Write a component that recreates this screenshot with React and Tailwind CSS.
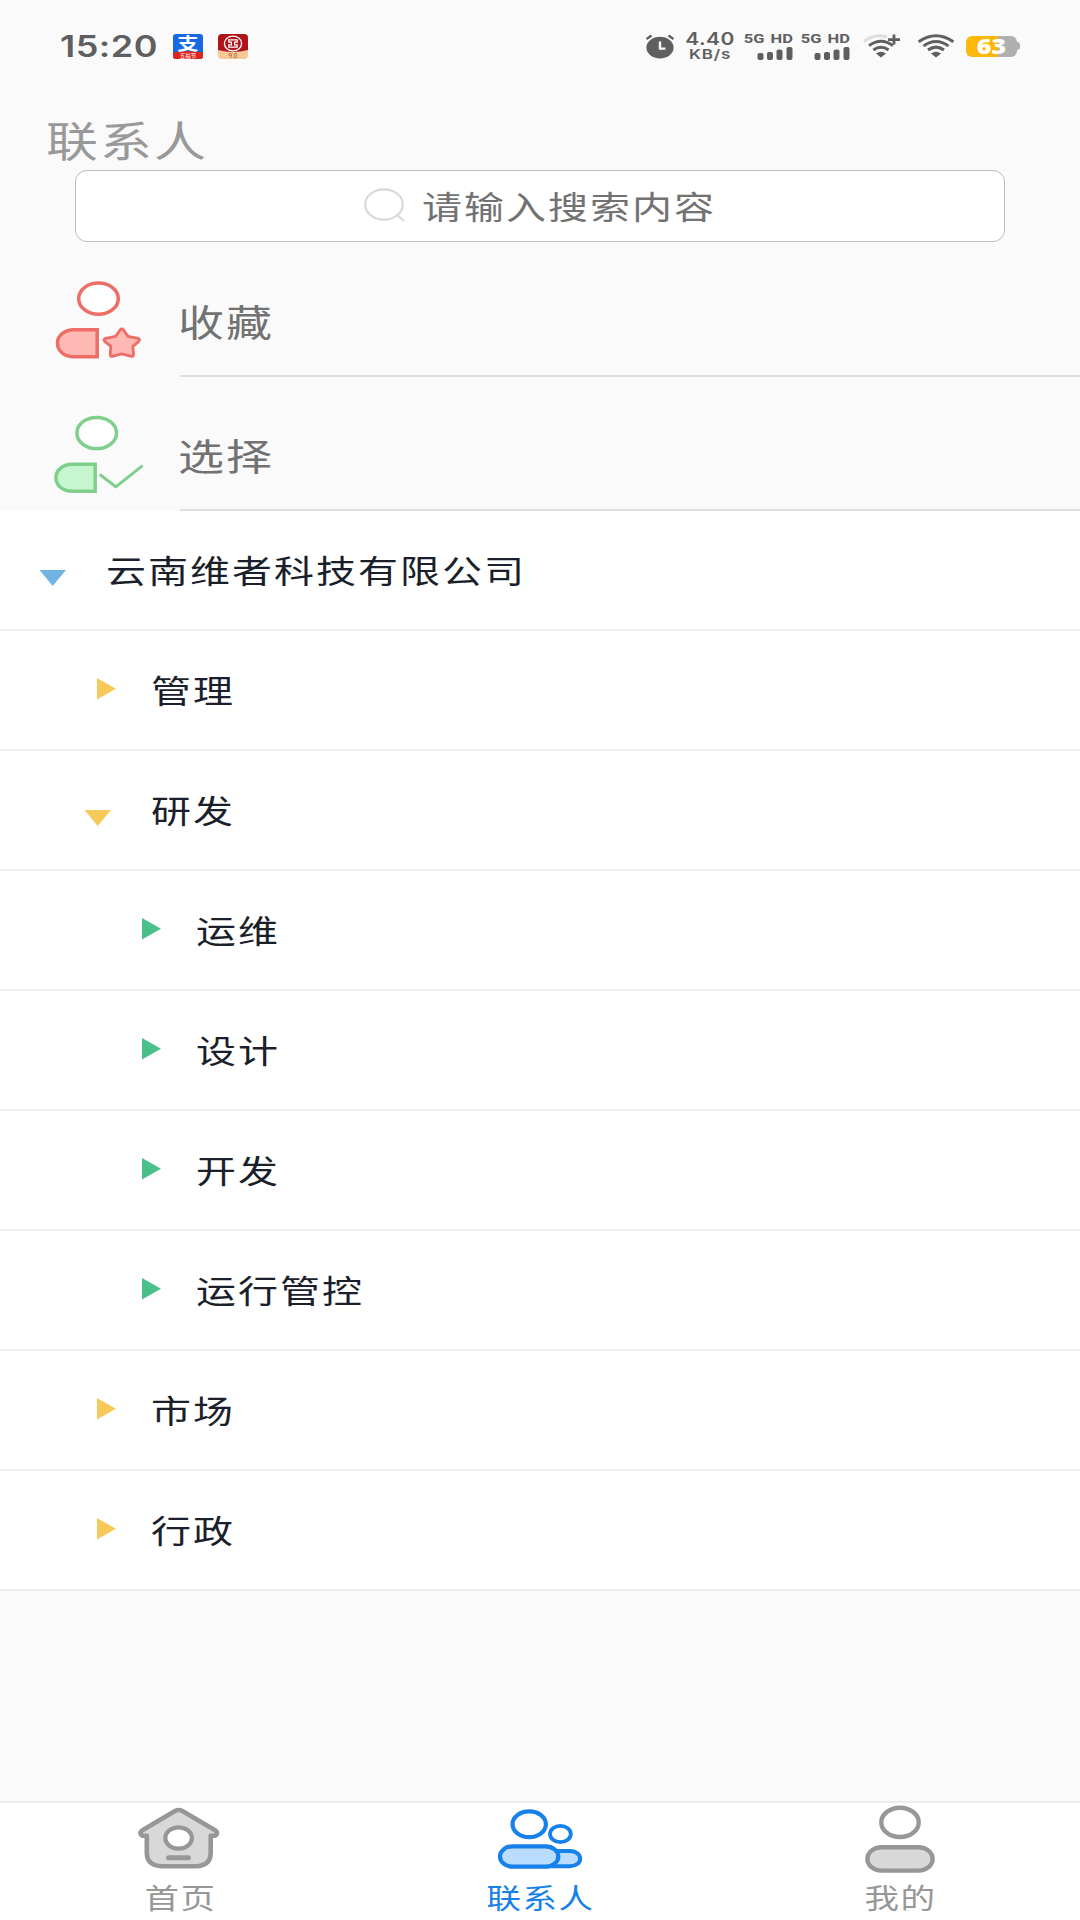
import clsx from 'clsx';

const departments = [
    { name: '云南维者科技有限公司', level: 0, open: true },
    { name: '管理', level: 1, open: false },
    { name: '研发', level: 1, open: true },
    { name: '运维', level: 2, open: false },
    { name: '设计', level: 2, open: false },
    { name: '开发', level: 2, open: false },
    { name: '运行管控', level: 2, open: false },
    { name: '市场', level: 1, open: false },
    { name: '行政', level: 1, open: false },
];

const levelStyles = [
    { indent: 'pl-[39px]', color: 'text-[#70b4e3]' },
    { indent: 'pl-[84px]', color: 'text-[#f6c959]' },
    { indent: 'pl-[129px]', color: 'text-[#4abf8a]' },
];

/** Wide text: glyphs are flattened vertically, the box keeps its size. */
function Wide({ className, children }) {
    return (
        <span
            className={clsx(
                'inline-block origin-center scale-y-[0.81] whitespace-nowrap',
                className,
            )}
        >
            {children}
        </span>
    );
}

function AlipayIcon() {
    return (
        <svg width="30" height="25" viewBox="0 0 30 25" className="overflow-visible">
            <rect width="30" height="25" rx="3" fill="#1668e3" />
            <path d="M0 18.5 Q15 16 30 18.5 V22 Q30 25 27 25 H3 Q0 25 0 22Z" fill="#e0241c" />
            <text
                transform="translate(15 15.6) scale(1.25 1)"
                textAnchor="middle"
                fontSize="17"
                fontWeight="700"
                fill="#fff"
                fontFamily="Noto Sans CJK SC, sans-serif"
            >
                支
            </text>
            <text
                x="15"
                y="23.8"
                textAnchor="middle"
                fontSize="5.5"
                fill="#fff"
                fontFamily="Noto Sans CJK SC, sans-serif"
            >
                五福节
            </text>
        </svg>
    );
}

function BankIcon() {
    return (
        <svg width="30" height="25" viewBox="0 0 30 25" className="overflow-visible">
            <rect width="30" height="25" rx="4" fill="#f5c998" />
            <path d="M0 4 Q0 0 4 0 H26 Q30 0 30 4 V16 Q15 20 0 16Z" fill="#b01418" />
            <ellipse cx="15" cy="9.5" rx="8.6" ry="7.3" fill="none" stroke="#fff" strokeWidth="1.3" />
            <path
                d="M10.8 5.8 H19.2 V8.2 H16.6 V10.8 H19.2 V13.2 H10.8 V10.8 H13.4 V8.2 H10.8Z"
                fill="none"
                stroke="#fff"
                strokeWidth="1.2"
            />
            <text
                x="15"
                y="24"
                textAnchor="middle"
                fontSize="6.5"
                fill="#b3541e"
                fontFamily="Roboto, sans-serif"
            >
                9.0
            </text>
        </svg>
    );
}

function AlarmIcon() {
    return (
        <svg width="30" height="25" viewBox="0 0 30 25" fill="none">
            <ellipse cx="15" cy="13.6" rx="13.6" ry="10.8" fill="#5f5f5f" />
            <path d="M1.6 5 L6.5 1.6 M23.5 1.6 L28.4 5" stroke="#5f5f5f" strokeWidth="2.4" />
            <path d="M15 7.5 V14.6 H20.5" stroke="#fafafa" strokeWidth="2.4" />
        </svg>
    );
}

function Signal() {
    return (
        <div className="flex w-[48px] flex-col items-end">
            <Wide className="mb-[2px] h-[12px] font-['Roboto',sans-serif] text-[16.5px] leading-[12px] font-bold [word-spacing:2px]">
                5G HD
            </Wide>
            <svg width="36" height="13" viewBox="0 0 36 13" fill="#5f5f5f">
                <rect x="0.5" y="6" width="6" height="7" rx="2" />
                <rect x="10" y="5" width="6" height="8" rx="2" />
                <rect x="19.5" y="2.5" width="6" height="10.5" rx="2" />
                <rect x="29.5" y="0" width="6" height="13" rx="2" />
            </svg>
        </div>
    );
}

function WifiPlusIcon() {
    return (
        <svg width="38" height="25" viewBox="0 0 38 25" fill="none">
            <path d="M1 7.5 Q12 -1 24 3" stroke="#dedede" strokeWidth="3" />
            <path d="M6 11.6 Q18 2.8 30 11.6" stroke="#5f5f5f" strokeWidth="3" />
            <path d="M10.4 16 Q18 10.4 25.6 16" stroke="#5f5f5f" strokeWidth="3" />
            <path d="M13 19.6 Q18 16 23 19.6 L18 23.6Z" fill="#5f5f5f" />
            <path d="M25 5.6 H37 M31 0.6 V10.6" stroke="#5f5f5f" strokeWidth="2.8" />
        </svg>
    );
}

function WifiIcon() {
    return (
        <svg width="38" height="25" viewBox="0 0 38 25" fill="none" stroke="#5f5f5f" strokeWidth="3">
            <path d="M1.6 7.8 Q19 -4.4 36.4 7.8" />
            <path d="M6.6 12 Q19 3 31.4 12" />
            <path d="M11 16 Q19 10.2 27 16" />
            <path d="M14 19.6 Q19 16 24 19.6 L19 23.6Z" fill="#5f5f5f" stroke="none" />
        </svg>
    );
}

function Battery() {
    return (
        <div className="flex items-center">
            <div className="flex h-[21px] w-[51px] items-center justify-center rounded-[6px] bg-[linear-gradient(to_right,#fdb90b_63%,#b0b0b0_63%)]">
                <Wide className="font-['Open_Sans',sans-serif] text-[25px] leading-[19px] font-extrabold text-white">
                    63
                </Wide>
            </div>
            <div className="h-2 w-[3px] rounded-r-sm bg-[#b0b0b0]" />
        </div>
    );
}

function StatusBar() {
    return (
        <header className="flex h-[92px] items-center pr-[60px] pl-[60px] font-['Inter',sans-serif] text-[#5f5f5f]">
            <Wide className="w-[113px] text-[36px] leading-[40px] font-semibold tracking-[0.5px]">
                15:20
            </Wide>
            <AlipayIcon />
            <div className="ml-[15px]">
                <BankIcon />
            </div>
            <div className="ml-auto flex items-center">
                <AlarmIcon />
                <div className="ml-[11px] flex w-[48px] flex-col items-center gap-px font-semibold">
                    <Wide className="text-[21px] leading-[14px] tracking-[0.4px]">4.40</Wide>
                    <Wide className="text-[17px] leading-[14px] tracking-[0.8px]">KB/s</Wide>
                </div>
                <div className="ml-[11px] flex gap-[9px]">
                    <Signal />
                    <Signal />
                </div>
                <div className="mr-[16px] ml-[13px]">
                    <WifiPlusIcon />
                </div>
                <WifiIcon />
                <div className="ml-[11px]">
                    <Battery />
                </div>
            </div>
        </header>
    );
}

function SearchIcon() {
    return (
        <svg width="42" height="34" viewBox="0 0 42 34" fill="none" stroke="#d8d8d8" strokeWidth="2.2">
            <ellipse cx="20" cy="16.5" rx="18.8" ry="15.2" />
            <path d="M33.5 27.5 L39.5 32.5" strokeLinecap="round" />
        </svg>
    );
}

function FavoritePerson() {
    return (
        <svg width="92" height="80" viewBox="52 278 92 80" stroke="#ec6e66" className="overflow-visible">
            <ellipse cx="98.5" cy="298.7" rx="19.8" ry="15.6" fill="#fff" strokeWidth="3.5" />
            <path d="M97.2 329.8 V356.8 H74 C52 356.5 52 330 74 329.8Z" fill="#ffb9b4" strokeWidth="3.5" />
            <path
                d="M120 330 Q121.8 328 123.6 330 L128 336.4 L138 338.4 Q140.8 339.5 138.6 341.6 L132.8 346.4 L133.6 354.6 Q133.4 357 130.4 356.2 L121.8 353.8 L113.2 356.2 Q110.4 357 110.2 354.6 L110.8 346.4 L105 341.6 Q102.6 339.5 105.6 338.4 L115.6 336.4Z"
                fill="#ffb9b4"
                strokeWidth="2.8"
                strokeLinejoin="round"
            />
        </svg>
    );
}

function SelectPerson() {
    return (
        <svg width="92" height="80" viewBox="52 412 92 80" stroke="#7fcf8c" className="overflow-visible">
            <ellipse cx="96.7" cy="433" rx="19.8" ry="15.6" fill="#fff" strokeWidth="3.5" />
            <path d="M95.2 464.3 V491.3 H72.4 C50.4 491 50.4 464.6 72.4 464.3Z" fill="#c6f6cf" strokeWidth="3.5" />
            <path
                d="M100.8 475.2 L115.8 486.8 L141.6 466.3"
                fill="none"
                strokeWidth="3"
                strokeLinecap="round"
                strokeLinejoin="round"
            />
        </svg>
    );
}

function Shortcut({ icon, label }) {
    return (
        <div className="flex h-[134px] pl-[52px]">
            <div className="flex w-[128px] items-center pt-4">{icon}</div>
            <div className="flex flex-1 items-center border-b-2 border-[#dfdfdf] pt-6">
                <Wide className="-ml-[2px] text-[46px] leading-[60px] tracking-[2px] text-[#727272]">
                    {label}
                </Wide>
            </div>
        </div>
    );
}

function Arrow({ open }) {
    return open ? (
        <svg width="27" height="16" viewBox="0 0 27 16" fill="currentColor" className="mt-[59px]">
            <path d="M0.5 0 H27 L13.7 16Z" />
        </svg>
    ) : (
        <svg width="19" height="22" viewBox="0 0 19 22" fill="currentColor" className="mt-[47px] ml-[13px]">
            <path d="M0 0 L19 10.8 L0 21.5Z" />
        </svg>
    );
}

function DepartmentRow({ name, level, open }) {
    const style = levelStyles[level];
    return (
        <li className={clsx('flex h-[120px] border-b-2 border-[#eeeff4]', style.indent)}>
            <div className={clsx('w-[67px]', style.color)}>
                <Arrow open={open} />
            </div>
            <Wide className="mb-[2px] self-center text-[40px] leading-[60px] tracking-[2px] text-[#1b1f2b]">
                {name}
            </Wide>
        </li>
    );
}

function HomeIcon() {
    return (
        <svg width="84" height="70" viewBox="138 1805 84 70" stroke="#979797" fill="#d8d8d8" strokeWidth="4.6">
            <path
                d="M175 1811 Q178.7 1809 182.4 1811 L215.5 1830.5 Q219 1833.5 215 1835.8 H210.7 V1853 Q210.5 1865.8 196 1866.2 H162 Q147 1865.8 146.8 1853 V1835.8 H142.5 Q138.5 1833.5 142 1830.5Z"
                strokeLinejoin="round"
            />
            <ellipse cx="178.6" cy="1838" rx="13.3" ry="10.7" fill="#fff" strokeWidth="4.2" />
            <path d="M168.6 1857.7 H188.4" strokeLinecap="round" strokeWidth="5" />
        </svg>
    );
}

function ContactsIcon() {
    return (
        <svg width="86" height="70" viewBox="497 1805 86 70" stroke="#1781ea" fill="#badcff" strokeWidth="4.2">
            <ellipse cx="529.2" cy="1824.3" rx="16.7" ry="12.9" fill="#fff" />
            <ellipse cx="560.4" cy="1834" rx="10.4" ry="8.2" fill="#fff" strokeWidth="3.8" />
            <path d="M545 1851 H570 C583.5 1851.5 583.5 1865.8 570 1866.3 H545Z" strokeWidth="4" />
            <rect x="500" y="1846.3" width="58.3" height="20.4" rx="12.5" ry="10.2" />
        </svg>
    );
}

function MineIcon() {
    return (
        <svg width="72" height="70" viewBox="864 1805 72 70" stroke="#979797" fill="#d8d8d8" strokeWidth="4.4">
            <ellipse cx="900" cy="1822.4" rx="18.7" ry="14.6" fill="#fff" />
            <rect x="867.4" y="1847.2" width="65.2" height="23.4" rx="14" ry="11.7" />
        </svg>
    );
}

const tabs = [
    { label: '首页', icon: <HomeIcon />, active: false },
    { label: '联系人', icon: <ContactsIcon />, active: true },
    { label: '我的', icon: <MineIcon />, active: false },
];

function TabBar() {
    return (
        <nav className="mt-auto grid h-[119px] grid-cols-3 border-t-2 border-[#ebecef] bg-white">
            {tabs.map((tab) => (
                <button
                    key={tab.label}
                    type="button"
                    className={clsx(
                        'flex flex-col items-center pt-[2px]',
                        tab.active ? 'text-[#1781ea]' : 'text-[#979797]',
                    )}
                >
                    {tab.icon}
                    <Wide className="ml-px text-[34.5px] leading-[44px] tracking-[1.5px]">
                        {tab.label}
                    </Wide>
                </button>
            ))}
        </nav>
    );
}

export default function App() {
    return (
        <div className="flex h-[1920px] w-[1080px] flex-col overflow-hidden bg-[#fafafa] font-['Noto_Sans_CJK_SC',sans-serif]">
            <StatusBar />
            <h1 className="h-[78px] pl-[46px] leading-none">
                <Wide className="mt-[17px] text-[52px] leading-[60px] tracking-[2px] text-[#999999]">
                    联系人
                </Wide>
            </h1>
            <div className="mx-[75px] mb-px flex h-[72px] items-center justify-center rounded-[12px] border border-[#bdbdbd] bg-white pb-[2px]">
                <SearchIcon />
                <Wide className="ml-[16px] text-[40px] leading-[60px] tracking-[2px] text-[#727272]">
                    请输入搜索内容
                </Wide>
            </div>
            <Shortcut icon={<FavoritePerson />} label="收藏" />
            <Shortcut icon={<SelectPerson />} label="选择" />
            <ul className="bg-white">
                {departments.map((dept) => (
                    <DepartmentRow key={dept.name} {...dept} />
                ))}
            </ul>
            <TabBar />
        </div>
    );
}
